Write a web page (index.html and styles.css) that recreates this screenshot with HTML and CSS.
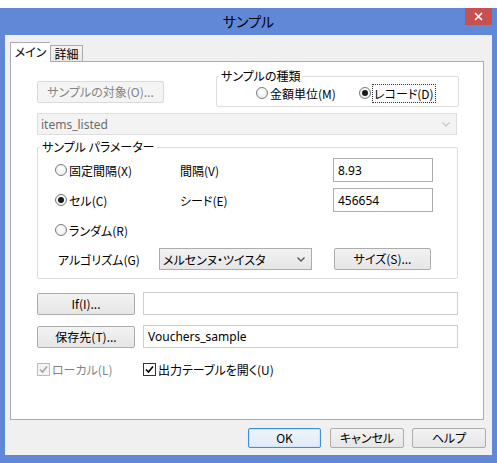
FILE: index.html
```html
<!DOCTYPE html>
<html lang="ja">
<head>
<meta charset="utf-8">
<link rel="stylesheet" href="styles.css">
</head>
<body>
<div class="top"></div>
<div class="window">
  <div class="titlebar">
    <div></div>
    <div class="title">サンプル</div>
    <div class="close"><svg width="9" height="9" viewBox="0 0 9 9"><path d="M1 1 L8 8 M8 1 L1 8" stroke="#fff" stroke-width="1.6"/></svg></div>
  </div>
  <div class="client">
    <div class="tabs">
      <div class="tab active">メイン</div>
      <div class="tab">詳細</div>
    </div>
    <div class="panel">
      <div class="row1">
        <div class="btn disabled target">サンプルの対象(O)...</div>
        <fieldset class="group kind">
          <legend>サンプルの種類</legend>
          <div class="radios">
            <div class="opt first"><span class="radio"></span><span>金額単位(M)</span></div>
            <div class="opt"><span class="radio on"></span><span class="focus">レコード(D)</span></div>
          </div>
        </fieldset>
      </div>
      <div class="combo disabled wide"><span>items_listed</span><svg class="chev" width="8" height="5" viewBox="0 0 8 5"><path d="M0.5 0.5 L4 4 L7.5 0.5" fill="none" stroke="#c4c4c4" stroke-width="1.2"/></svg></div>
      <fieldset class="group params">
        <legend>サンプル パラメーター</legend>
        <div class="pgrid">
          <div class="opt"><span class="radio"></span><span>固定間隔(X)</span></div>
          <div class="lbl">間隔(V)</div>
          <div class="input">8.93</div>
          <div class="opt"><span class="radio on"></span><span>セル(C)</span></div>
          <div class="lbl">シード(E)</div>
          <div class="input">456654</div>
          <div class="opt"><span class="radio"></span><span>ランダム(R)</span></div>
          <div></div>
          <div></div>
        </div>
        <div class="algo">
          <div class="algolbl">アルゴリズム(G)</div>
          <div class="combo algocombo"><span>メルセンヌ・ツイスタ</span><svg class="chev" width="8" height="5" viewBox="0 0 8 5"><path d="M0.5 0.5 L4 4 L7.5 0.5" fill="none" stroke="#555" stroke-width="1.3"/></svg></div>
          <div class="btn size">サイズ(S)...</div>
        </div>
      </fieldset>
      <div class="frow first">
        <div class="btn fbtn">If(I)...</div>
        <div class="input long"></div>
      </div>
      <div class="frow">
        <div class="btn fbtn">保存先(T)...</div>
        <div class="input long">Vouchers_sample</div>
      </div>
      <div class="checks">
        <div class="chk disabled local"><span class="box"><svg width="9" height="9" viewBox="0 0 9 9"><path d="M1 4.5 L3.5 7 L8 1.5" fill="none" stroke="#a6a6a6" stroke-width="1.6"/></svg></span><span>ローカル(L)</span></div>
        <div class="chk"><span class="box"><svg width="9" height="9" viewBox="0 0 9 9"><path d="M1 4.5 L3.5 7 L8 1.5" fill="none" stroke="#000" stroke-width="1.6"/></svg></span><span>出力テーブルを開く(U)</span></div>
      </div>
    </div>
    <div class="buttons">
      <div class="btn dlg ok">OK</div>
      <div class="btn dlg">キャンセル</div>
      <div class="btn dlg">ヘルプ</div>
    </div>
  </div>
</div>
</body>
</html>
```
FILE: styles.css
```css
* { box-sizing: border-box; }
html, body { margin: 0; padding: 0; background: #fff; }
body {
  font-family: "Noto Sans CJK JP", "Noto Sans", sans-serif;
  font-size: 12px;
  font-feature-settings: "palt";
  color: #000;
  width: 497px;
  height: 463px;
  overflow: hidden;
}
.top { height: 8px; background: #fff; }
.window {
  width: 497px;
  background: #6088d6;
  padding: 0 5px 8px 5px;
}
.titlebar {
  height: 27px;
  display: grid;
  grid-template-columns: 1fr auto 1fr;
  align-items: start;
}
.title {
  font-size: 14px;
  line-height: 27px;
  color: #000;
}
.close {
  justify-self: end;
  width: 27px;
  height: 17px;
  background: #c75050;
  display: flex;
  align-items: center;
  justify-content: center;
}
.client {
  background: #f0f0f0;
  height: 420px;
  padding: 7px 8px 0 5px;
}
.tabs {
  display: flex;
  align-items: flex-end;
  height: 19px;
}
.tab {
  height: 16px;
  border: 1px solid #acacac;
  border-bottom: none;
  background: linear-gradient(#f3f3f3, #e8e8e8);
  padding: 0;
  line-height: 15px;
  font-size: 12px;
  white-space: nowrap;
  display: flex;
  justify-content: center;
}
.tab.active {
  width: 40px;
  height: 20px;
  margin-bottom: -1px;
  background: #fff;
  position: relative;
  z-index: 1;
  line-height: 18px;
  border-right: none;
}
.tab:not(.active) { width: 33px; }
.panel {
  height: 359px;
  background: #fff;
  border: 1px solid #acacac;
  padding: 0 0 0 26px;
}
.row1 {
  display: flex;
  margin-top: 7px;
  height: 38px;
}
.btn {
  height: 22px;
  border: 1px solid #acacac;
  border-radius: 2px;
  background: linear-gradient(#f2f2f2, #e6e6e6);
  display: flex;
  align-items: center;
  justify-content: center;
  line-height: 14px;
  white-space: nowrap;
}
.btn.disabled {
  background: #f4f4f4;
  border-color: #d9d9d9;
  color: #838383;
}
.target { width: 127px; margin-top: 12px; }
.group {
  margin: 0;
  padding: 0;
  border: 1px solid #dcdcdc;
  border-radius: 2px;
  min-width: 0;
}
.group legend {
  margin-left: 2px;
  padding: 0 2px;
  line-height: 14px;
  height: 14px;
}
.kind {
  margin-left: 52px;
  width: 243px;
  height: 38px;
}
.radios {
  display: flex;
  height: 20px;
  align-items: center;
  padding-left: 39px;
}
.opt {
  display: flex;
  align-items: center;
  gap: 2px;
  white-space: nowrap;
}
.radios .first { width: 103px; }
.radio {
  width: 12px;
  height: 12px;
  border-radius: 50%;
  border: 1px solid #7a7a7a;
  background: radial-gradient(circle at 50% 40%, #fff, #e8e8e8);
  display: inline-flex;
  align-items: center;
  justify-content: center;
  flex: none;
}
.radio.on::after {
  content: "";
  width: 6px;
  height: 6px;
  border-radius: 50%;
  background: #1a1a1a;
}
.focus {
  outline: 1px dotted #333;
  outline-offset: 0;
  padding: 0 1px;
}
.combo {
  height: 22px;
  border: 1px solid #acacac;
  background: linear-gradient(#f2f2f2, #e6e6e6);
  display: flex;
  align-items: center;
  justify-content: space-between;
  padding: 0 6px 0 3px;
  white-space: nowrap;
}
.combo.disabled {
  background: #f3f3f3;
  border-color: #dedede;
  color: #6d6d6d;
  font-family: "Noto Sans", sans-serif;
  font-size: 12px;
}
.wide { width: 420px; margin-top: 6px; }
.params {
  margin-top: 5px;
  width: 421px;
  height: 139px;
}
.pgrid {
  display: grid;
  grid-template-columns: 125px 153px 100px;
  grid-auto-rows: 30px;
  align-items: center;
  padding-left: 17px;
  margin-top: 1px;
}
.input {
  height: 24px;
  border: 1px solid #acacac;
  border-top-color: #abadb3;
  background: #fff;
  display: flex;
  align-items: center;
  padding-left: 4px;
  font-family: "Noto Sans", sans-serif;
  font-size: 12px;
  white-space: nowrap;
}
.algo {
  display: flex;
  align-items: center;
  height: 22px;
  margin-top: 3px;
  padding-left: 20px;
}
.algolbl { width: 101px; }
.algocombo { width: 153px; }
.size { width: 97px; margin-left: 22px; }
.frow {
  display: flex;
  align-items: center;
  height: 23px;
  margin-top: 10px;
}
.frow.first { margin-top: 13px; }
.fbtn { width: 98px; }
.input.long { width: 315px; height: 23px; margin-left: 8px; border-color: #cfcfcf; }
.checks {
  display: flex;
  align-items: center;
  height: 16px;
  margin-top: 13px;
}
.chk {
  display: flex;
  align-items: center;
  gap: 2px;
  white-space: nowrap;
}
.local { width: 106px; color: #838383; }
.box {
  width: 13px;
  height: 13px;
  border: 1px solid #333;
  background: #fff;
  display: inline-flex;
  align-items: center;
  justify-content: center;
}
.chk.disabled .box { border-color: #bcbcbc; background: #f4f4f4; }
.buttons {
  display: flex;
  justify-content: flex-end;
  gap: 8px;
  margin-top: 8px;
  margin-right: -2px;
}
.dlg { width: 74px; height: 20px; }
.ok {
  width: 73px;
  margin-right: 1px;
  border-color: #3c8fe0;
  background: linear-gradient(#eef4fa, #e2ebf4);
  box-shadow: inset 0 0 0 1px #cfe4f8;
}
```
